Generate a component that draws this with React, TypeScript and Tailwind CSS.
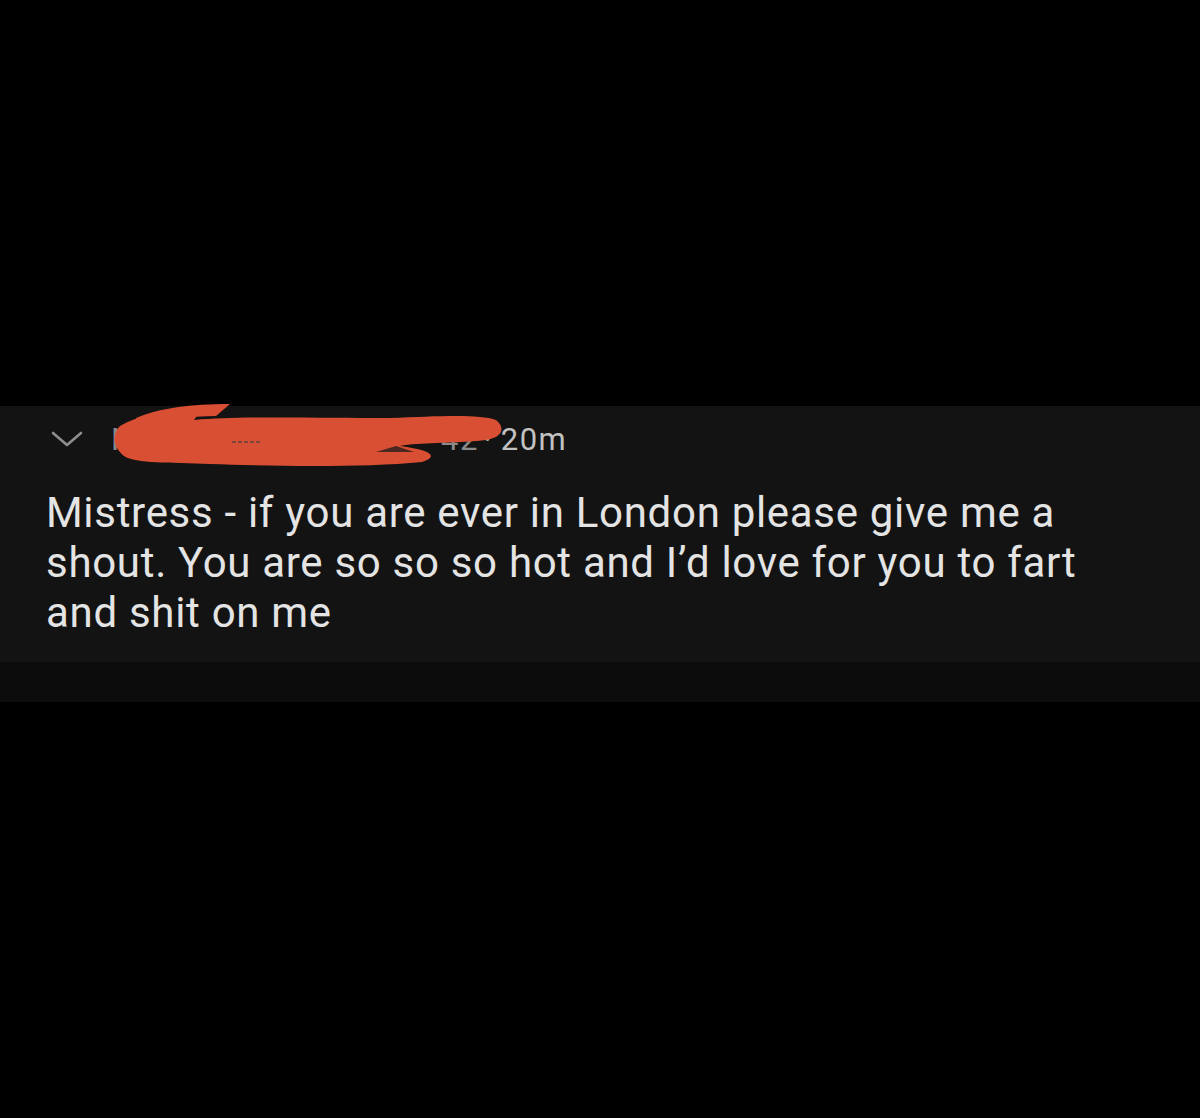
// red redaction scribble over the username
const Scribble = () => (
  <svg
    className="absolute left-[64px] top-[-16px] pointer-events-none"
    width="396"
    height="66"
    viewBox="0 0 396 66"
  >
    <path
      d="M10 22 C30 10 60 6 90 8 L84 16 C130 12 200 14 280 14 C330 12 370 10 386 16 C396 24 392 34 376 36 C340 40 310 38 290 42 C320 46 330 52 312 58 C250 64 160 62 100 60 C60 58 26 60 14 52 C2 42 2 30 10 22 Z"
      fill="#d94f34"
    />
    <path d="M26 14 C50 4 80 0 120 0 L106 12 C80 12 56 16 30 22 Z" fill="#d94f34" />
    <path d="M266 48 L286 42 L304 48 Z" fill="#1a1a1a" opacity="0.75" />
    <path d="M122 38 L150 38" stroke="#7a463a" strokeWidth="2" strokeDasharray="4 2" />
  </svg>
);

const Chevron = () => (
  <svg width="32" height="18" viewBox="0 0 32 18" className="ml-[5px] mb-[3px] shrink-0">
    <polyline
      points="2,3 16,15 30,3"
      fill="none"
      stroke="#8e8e8e"
      strokeWidth="2.6"
      strokeLinecap="round"
      strokeLinejoin="round"
    />
  </svg>
);

export default function App() {
  return (
    <div
      className="w-[1200px] h-[1118px] bg-black flex flex-col"
      style={{ fontFamily: "Roboto, 'Liberation Sans', sans-serif" }}
    >
      <div className="h-[406px] shrink-0" />

      {/* Comment */}
      <div className="bg-[#131313] h-[256px] shrink-0 px-[46px] pt-[14px]">
        <div className="relative flex items-center h-[40px] text-[#c2c2c2] text-[31px] tracking-[1.5px]">
          <Chevron />
          <span className="ml-[28px] w-[330px] text-[#8a8a8a]">N</span>
          <span className="text-[#8a8a8a]">42</span>
          <span className="ml-[6px] text-[#bbb] text-[16px]">•</span>
          <span className="ml-[9px]">20m</span>
          <Scribble />
        </div>
        <p className="mt-[28px] text-[42px] leading-[50px] tracking-[0.7px] text-[#e4e4e4] w-[1100px]">
          Mistress - if you are ever in London please give me a shout. You are so so so hot and I’d love
          for you to fart and shit on me
        </p>
      </div>

      <div className="bg-[#0c0c0c] h-[40px] shrink-0" />
      <div className="flex-1 bg-black" />
    </div>
  );
}
